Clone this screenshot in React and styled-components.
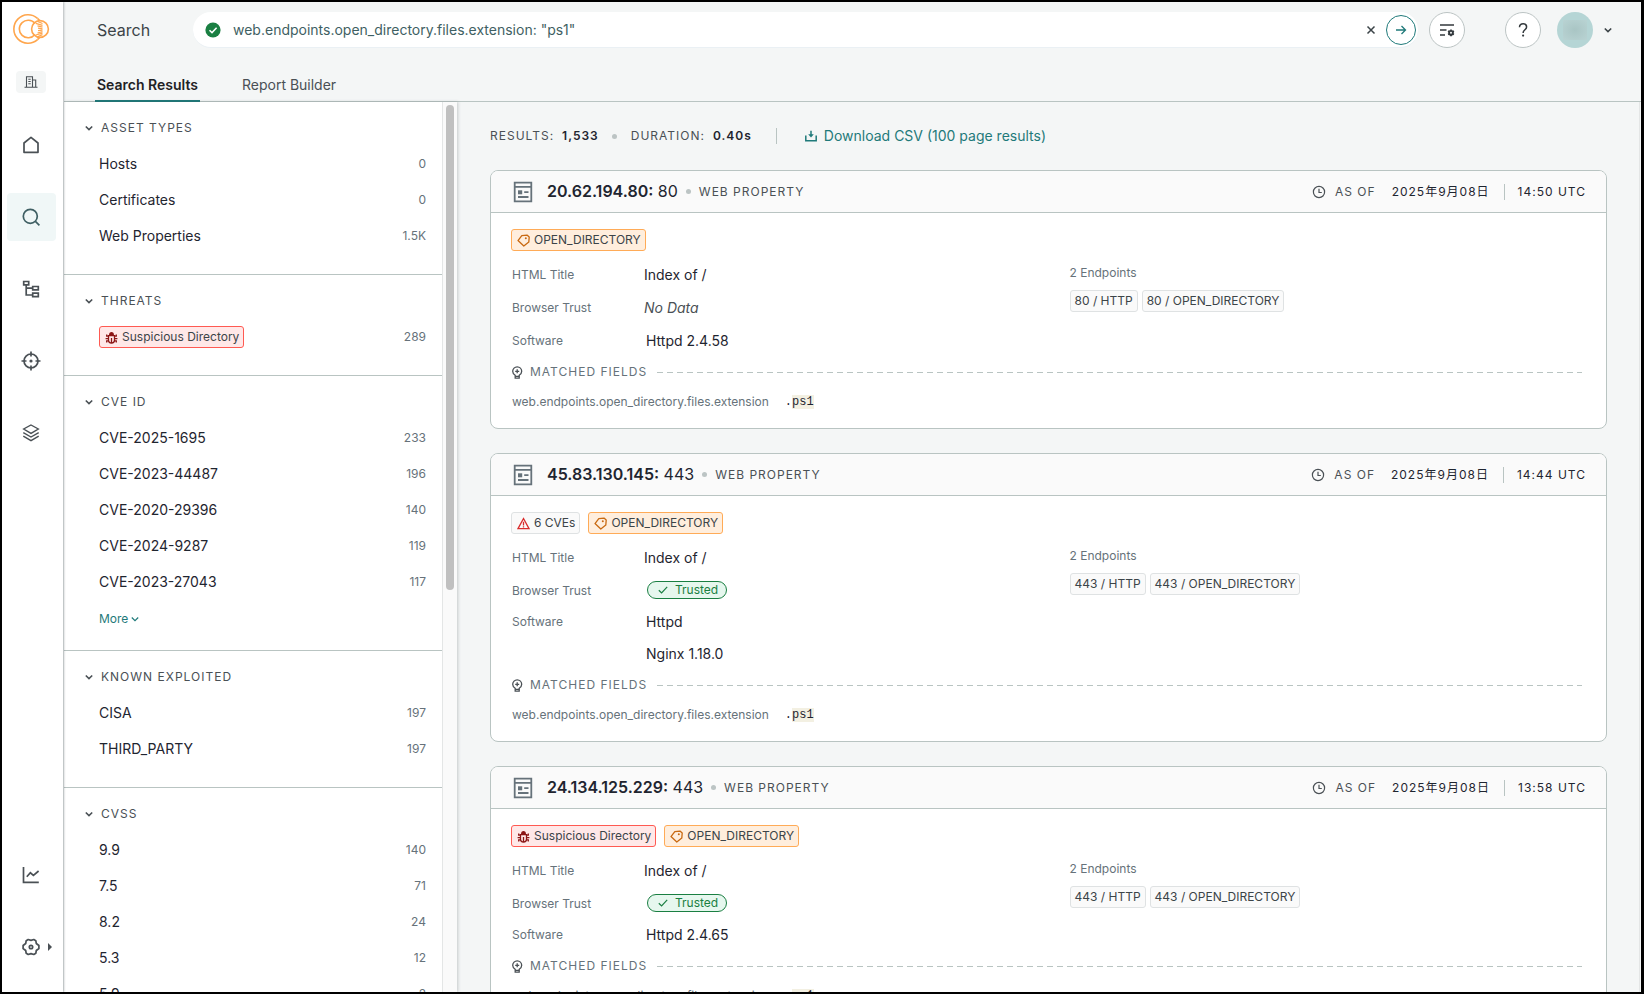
import React, { useState } from 'react';
import styled, { createGlobalStyle, css } from 'styled-components';

const GlobalStyle = createGlobalStyle`
    * {
        box-sizing: border-box;
    }

    body {
        margin: 0;
        font-family: Inter, "Noto Sans CJK JP", sans-serif;
        font-size: 14px;
        line-height: 20px;
        color: #1f2530;
        background: #f4f6f6;
    }

    button, input {
        font: inherit;
        color: inherit;
        margin: 0;
        padding: 0;
        border: 0;
        background: none;
    }

    button {
        cursor: pointer;
    }

    a {
        color: inherit;
        text-decoration: none;
    }

    h2, h3, p, ul, dl, dd {
        margin: 0;
        padding: 0;
        font-weight: 400;
        list-style: none;
    }
`;

// facet groups
const facetGroups = [
    {
        title: 'ASSET TYPES',
        items: [['Hosts', '0'], ['Certificates', '0'], ['Web Properties', '1.5K']],
    },
    { title: 'THREATS', threat: true, items: [['Suspicious Directory', '289']] },
    {
        title: 'CVE ID',
        more: true,
        items: [
            ['CVE-2025-1695', '233'],
            ['CVE-2023-44487', '196'],
            ['CVE-2020-29396', '140'],
            ['CVE-2024-9287', '119'],
            ['CVE-2023-27043', '117'],
        ],
    },
    { title: 'KNOWN EXPLOITED', items: [['CISA', '197'], ['THIRD_PARTY', '197']] },
    {
        title: 'CVSS',
        items: [['9.9', '140'], ['7.5', '71'], ['8.2', '24'], ['5.3', '12'], ['5.9', '2']],
    },
];

// search results
const results = [
    {
        ip: '20.62.194.80',
        port: '80',
        time: '14:50 UTC',
        badges: [['tag', 'OPEN_DIRECTORY']],
        trusted: false,
        software: ['Httpd 2.4.58'],
    },
    {
        ip: '45.83.130.145',
        port: '443',
        time: '14:44 UTC',
        badges: [['cve', '6 CVEs'], ['tag', 'OPEN_DIRECTORY']],
        trusted: true,
        software: ['Httpd', 'Nginx 1.18.0'],
    },
    {
        ip: '24.134.125.229',
        port: '443',
        time: '13:58 UTC',
        badges: [['threat', 'Suspicious Directory'], ['tag', 'OPEN_DIRECTORY']],
        trusted: true,
        software: ['Httpd 2.4.65'],
    },
];

const badgeColors = {
    tag: { border: '#ffab57', background: '#ffeedd' },
    threat: { border: '#ff5a52', background: '#ffe8e8' },
    cve: { border: '#dfe2e3', background: '#fafafa' },
};

/* ---------- layout ---------- */

const Frame = styled.div`
    display: flex;
    height: 100vh;
    overflow: hidden;
    border: 2px solid #000;
    border-right-width: 3px;
`;

const Sidebar = styled.nav`
    flex: none;
    width: 61px;
    display: flex;
    flex-direction: column;
    align-items: center;
    padding: 8px 3px 0 0;
    background: #fff;
    color: #4a5055;
    z-index: 1;
    box-shadow: 1px 0 2px rgba(60, 70, 75, 0.35);
`;

const Logo = styled.a`
    display: flex;
    height: 38px;
`;

const OrgButton = styled.button`
    display: flex;
    align-items: center;
    justify-content: center;
    width: 30px;
    height: 22px;
    margin: 23px 0 16px;
    border-radius: 4px;
    background: #f4f6f6;
`;

const NavLink = styled.a`
    display: flex;
    align-items: center;
    justify-content: center;
    width: 49px;
    height: 48px;
    margin: 12px 0;
    border-radius: 4px;
    background: ${({ $active }) => ($active ? '#f0f7f7' : 'transparent')};
    color: ${({ $active }) => ($active ? '#3f5f63' : 'inherit')};
`;

const NavBottom = styled.div`
    display: flex;
    flex-direction: column;
    margin-top: auto;
    padding-bottom: 9px;
`;

const SettingsLink = styled(NavLink)`
    position: relative;
`;

const Caret = styled.span`
    position: absolute;
    left: 41px;
    top: 20px;
    border: 4px solid transparent;
    border-left-color: #4a5055;
    border-right: 0;
`;

const Page = styled.div`
    flex: 1;
    min-width: 0;
    display: flex;
    flex-direction: column;
    padding-left: 1px;
`;

const TopBar = styled.header`
    display: flex;
    align-items: center;
    height: 56px;
    padding: 0 28px 0 33px;
    color: #3c4448;
`;

const PageTitle = styled.h2`
    width: 96px;
    font-size: 16px;
`;

const SearchForm = styled.form`
    flex: 1;
    display: flex;
    align-items: center;
    height: 36px;
    padding: 0 2px 0 12px;
    border-radius: 18px;
    border-bottom: 1px solid #eaf0f4;
    background: #fff;
`;

const SearchInput = styled.input`
    flex: 1;
    min-width: 0;
    margin-left: 12px;
    color: #3f5f63;
    outline: none;
`;

const ClearButton = styled.button`
    display: flex;
    margin-right: 10px;
`;

const RoundButton = styled.button`
    flex: none;
    display: flex;
    align-items: center;
    justify-content: center;
    width: ${({ $size }) => $size || 36}px;
    height: ${({ $size }) => $size || 36}px;
    border: 1px solid ${({ $accent }) => ($accent ? '#1f7a7a' : '#bcc4c4')};
    border-radius: 50%;
    background: #fff;
    color: ${({ $accent }) => ($accent ? '#1f7a7a' : '#33393d')};
`;

const TopActions = styled.div`
    display: flex;
    align-items: center;
    margin-left: 11px;
`;

const UserButton = styled.button`
    display: flex;
    align-items: center;
    gap: 10px;
    margin-left: 16px;
`;

const HelpSlot = styled.div`
    margin-left: 40px;
`;

const Avatar = styled.span`
    display: flex;
    align-items: center;
    justify-content: center;
    width: 36px;
    height: 36px;
    border-radius: 50%;
    background: #b5d5d5;

    &::after {
        content: '';
        width: 24px;
        height: 20px;
        background: radial-gradient(#a9c5c4, #b9d3d3);
    }
`;

const Tabs = styled.div`
    display: flex;
    gap: 40px;
    height: 44px;
    padding-left: 31px;
    border-bottom: 1px solid #b9c4c2;
`;

const Tab = styled.button`
    height: 44px;
    padding: 12px 2px 0;
    border-bottom: 2px solid ${({ $active }) => ($active ? '#1f7a7a' : 'transparent')};
    font-weight: ${({ $active }) => ($active ? 600 : 400)};
    color: ${({ $active }) => ($active ? '#1f2225' : '#4a5055')};
`;

const Content = styled.div`
    flex: 1;
    min-height: 0;
    display: flex;
`;

/* ---------- facets ---------- */

const FacetPanel = styled.aside`
    flex: none;
    display: flex;
    width: 393px;
    background: #fafafa;
    box-shadow: 1px 0 3px rgba(60, 70, 75, 0.25);
`;

const FacetList = styled.div`
    width: 379px;
    overflow: hidden;
    border-right: 1px solid #e4e6e6;
    background: #fff;
`;

const ScrollTrack = styled.div`
    flex: 1;
    display: flex;
    justify-content: center;
    padding-top: 3px;
`;

const ScrollThumb = styled.div`
    width: 8px;
    height: 485px;
    border-radius: 4px;
    background: #c0c0c0;
`;

const FacetSection = styled.section`
    padding: 8px 16px 20px 20px;
    border-bottom: 1px solid #b9c4c2;
`;

const FacetTitle = styled.button`
    display: flex;
    align-items: center;
    gap: 7px;
    height: 36px;
    font-size: 12px;
    letter-spacing: 1px;
    color: #4a5055;
`;

const FacetRow = styled.li`
    display: flex;
    align-items: center;
    justify-content: space-between;
    height: 36px;
    padding-left: 15px;
`;

const Count = styled.span`
    font-size: 12px;
    color: #66727a;
`;

const MoreButton = styled.button`
    display: flex;
    align-items: center;
    gap: 2px;
    height: 30px;
    padding: 8px 0 0 15px;
    font-size: 12px;
    color: #1f7a7a;
`;

/* ---------- results ---------- */

const Main = styled.main`
    flex: 1;
    min-width: 0;
    padding: 0 32px 0 33px;
    margin-right: 1px;
    border-right: 1px solid #e4e6e6;
    overflow: hidden;
`;

const caps = css`
    font-size: 12px;
    letter-spacing: 1px;
`;

const Summary = styled.div`
    ${caps}
    display: flex;
    align-items: center;
    height: 68px;
    color: #4a5055;
`;

const Strong = styled.strong`
    margin-left: 8px;
    font-weight: 600;
    color: #1f2530;
`;

const Dot = styled.span`
    width: 5px;
    height: 5px;
    margin: ${({ $wide }) => ($wide ? '0 14px 0 13px' : '0 8px')};
    border-radius: 50%;
    background: #bcc4c4;
`;

const Divider = styled.span`
    width: 1px;
    height: 16px;
    margin: ${({ $wide }) => ($wide ? '0 28px 0 24px' : '0 13px 0 14px')};
    background: #b9c4c2;
`;

const DownloadLink = styled.a`
    display: flex;
    align-items: center;
    gap: 7px;
    font-size: 14px;
    letter-spacing: 0;
    color: #1f7a7a;
`;

const Card = styled.article`
    margin-bottom: 24px;
    border: 1px solid #b9c4c2;
    border-radius: 8px;
    overflow: hidden;
    background: #fff;
`;

const CardHeader = styled.header`
    ${caps}
    display: flex;
    align-items: center;
    height: 42px;
    padding: 0 20px 0 22px;
    border-bottom: 1px solid #b9c4c2;
    background: #fafafa;
    color: #4a5055;
`;

const CardTitle = styled.h3`
    margin-left: 14px;
    padding-bottom: 1px;
    font-size: 16px;
    letter-spacing: 0;
    color: #1f2530;

    b {
        font-weight: 600;
    }
`;

const AsOf = styled.div`
    display: flex;
    align-items: center;
    margin-left: auto;

    svg {
        margin-right: 9px;
    }

    time {
        color: #1f2530;
    }
`;

const DateText = styled.time`
    margin-left: 16px;
`;

const CardBody = styled.div`
    padding: 16px 20px 11px;
`;

const Badges = styled.div`
    display: flex;
    gap: ${({ $gap }) => $gap || 8}px;
`;

const Badge = styled.span`
    display: inline-flex;
    align-items: center;
    gap: 4px;
    height: 22px;
    padding: 0 4px 0 ${({ $plain }) => ($plain ? 4 : 5)}px;
    border: 1px solid ${({ $kind }) => badgeColors[$kind].border};
    border-radius: 3px;
    background: ${({ $kind }) => badgeColors[$kind].background};
    font-size: 12px;
    color: #3c4448;
`;

const Columns = styled.div`
    display: grid;
    grid-template-columns: 1fr 1fr;
    column-gap: 42px;
    padding-top: 8px;
`;

const Fields = styled.dl`
    display: grid;
    grid-template-columns: 132px 1fr;
    grid-template-rows: 33px ${({ $trusted }) => ($trusted ? 31 : 33)}px auto;
    padding-left: 1px;
    line-height: 32px;
`;

const Label = styled.dt`
    font-size: 12px;
    color: #66727a;
`;

const Value = styled.dd`
    display: flex;
    align-items: center;
    padding-bottom: 2px;
    color: ${({ $muted }) => ($muted ? '#4a5055' : '#1f2530')};
    font-style: ${({ $muted }) => ($muted ? 'italic' : 'normal')};
`;

const SoftwareList = styled.dd`
    padding-left: 2px;
`;

const Trusted = styled.span`
    display: inline-flex;
    align-items: center;
    gap: 7px;
    height: 18px;
    margin-left: 3px;
    padding: 0 8px 0 10px;
    border: 1px solid #1a7f42;
    border-radius: 9px;
    background: #e6f7ee;
    font-size: 12px;
    color: #1a7f42;
`;

const EndpointsLabel = styled.p`
    height: 27px;
    margin-bottom: 4px;
    font-size: 12px;
    line-height: 27px;
    color: #66727a;
`;

const MatchedTitle = styled.div`
    ${caps}
    display: flex;
    align-items: center;
    gap: 6px;
    height: 30px;
    color: #66727a;
`;

const DashedLine = styled.span`
    flex: 1;
    height: 1px;
    margin: 0 4px;
    background: repeating-linear-gradient(90deg, #b9c4c2 0 6px, transparent 6px 10px);
`;

const MatchedRow = styled.div`
    display: flex;
    align-items: center;
    gap: 16px;
    height: 30px;
    padding-left: 1px;
    font-size: 12px;
    color: #66727a;
`;

const Code = styled.code`
    font-family: "Liberation Mono", monospace;
    font-size: 12px;
    line-height: 12px;
    color: #1f2530;

    mark {
        background: #f3f0e2;
        color: inherit;
    }
`;

/* ---------- icons ---------- */

const Icon = ({ size = 18, box = 18, width = 1.7, children }) => (
    <svg
        width={size}
        height={size}
        viewBox={`0 0 ${box} ${box}`}
        fill="none"
        stroke="currentColor"
        strokeWidth={width}
        aria-hidden="true"
    >
        {children}
    </svg>
);

const LogoIcon = () => (
    <svg width="38" height="38" viewBox="0 0 38 38" fill="none" stroke="#ffa64d" strokeWidth="1.6" aria-hidden="true">
        <path d="M25.500 8.400A14.200 14.200 0 1 0 25.500 29.600" />
        <path d="M23 13.500A8.800 8.800 0 1 0 23 24.500" />
        <path d="M25.500 8.400l2 2M25.500 29.600l2-2" />
        <circle cx="28" cy="19" r="8.4" />
        <path
            strokeWidth="1.2"
            d="M25 11.200l5.500 2.300M23.800 13.400l6.700 2M25.500 15.800l5 1.400M26 18.200l4.500.6M26 20.600l4.500-.4M25.500 23l5-1.300M23.800 25l6.700-1.900M25.500 26.800l5-2.200"
        />
    </svg>
);

const BuildingIcon = () => (
    <Icon size={14} box={14} width={1.1}>
        <path d="M.5 12.2h13M2.500 12V1.700h6V12M8.500 5h3.200v7M4.300 4.200h2.400M4.300 6.500h2.400M4.300 8.800h2.400" />
    </Icon>
);

const HomeIcon = () => (
    <Icon>
        <path strokeLinejoin="round" d="M2 7l7-5.600L16 7v9.300H2z" />
    </Icon>
);

const SearchIcon = () => (
    <Icon>
        <circle cx="8.300" cy="8.300" r="7" />
        <path d="M13.400 13.400l4 4" />
    </Icon>
);

const TreeIcon = () => (
    <Icon>
        <path d="M1.700 1.500h5v3.300h-5zM10.700 6.500h5.600v3.400h-5.600zM10.700 13.200h5.600v3.400h-5.600zM4.200 5v10h6.500M4.200 8.200h6.500" />
    </Icon>
);

const TargetIcon = () => (
    <Icon size={20} box={20}>
        <circle cx="10" cy="10" r="7" />
        <path d="M10 .5v5M10 14.500v5M.5 10h5M14.500 10h5" />
        <circle cx="10" cy="10" r="1.600" fill="currentColor" stroke="none" />
    </Icon>
);

const LayersIcon = () => (
    <Icon width={1.4}>
        <path d="M9 1l7.300 4L9 9.400 1.700 5zM1.300 8.700L9 13l7.700-4.300M1.300 12.200L9 16.600l7.700-4.400" />
    </Icon>
);

const ChartIcon = () => (
    <Icon>
        <path d="M1.500 1v15.400h15.300M4.800 10.800l3.600-4 3 2.500L16.600 5" />
    </Icon>
);

const GearIcon = () => (
    <Icon>
        <path
            strokeLinejoin="round"
            d="M6.200 1.500L9 2.400l2.800-.9 2 1.200.5 2.800 2.600 2v3l-2.600 2-.5 2.800-2 1.200L9 15.600l-2.800.9-2-1.200-.5-2.800-2.600-2v-3l2.600-2 .5-2.800z"
        />
        <circle cx="9" cy="9" r="1.700" />
    </Icon>
);

const CheckCircleIcon = () => (
    <svg width="16" height="16" viewBox="0 0 16 16" aria-hidden="true">
        <circle cx="8" cy="8" r="7.600" fill="#1a7f42" />
        <path d="M4.500 8.200l2.500 2.400 4.600-4.800" fill="none" stroke="#fff" strokeWidth="1.500" />
    </svg>
);

const CloseIcon = () => (
    <Icon size={10} box={10} width={1.5}>
        <path d="M1.500 1.500l7 7M8.500 1.500l-7 7" />
    </Icon>
);

const ArrowIcon = () => (
    <Icon size={12} box={12} width={1.3}>
        <path d="M1 6h9.500M6.500 2l4 4-4 4" />
    </Icon>
);

const FilterIcon = () => (
    <Icon size={16} box={16} width={1.5}>
        <path d="M1 3h14M1 8h6.500M1 13h5" />
        <circle cx="12" cy="10.800" r="1.900" strokeWidth="1.900" />
        <path strokeWidth="1.700" d="M12 7.400v1.200M12 13v1.200M9.100 9.100l1 .6M13.900 11.900l1 .6M9.100 12.500l1-.6M13.900 9.700l1-.6" />
    </Icon>
);

const HelpIcon = () => (
    <Icon size={16} box={16} width={1.5}>
        <path d="M4.500 5.200C4.500 3 6 1.800 8.100 1.800s3.500 1.200 3.500 3.100c0 2.700-3.500 3-3.500 6" />
        <circle cx="8.100" cy="13.600" r="1.100" fill="currentColor" stroke="none" />
    </Icon>
);

const ChevronIcon = ({ width = 1.6 }) => (
    <Icon size={10} box={10} width={width}>
        <path d="M1.800 3.500L5 6.600l3.200-3.100" />
    </Icon>
);

const DownloadIcon = () => (
    <Icon size={12} box={12} width={1.5}>
        <path d="M.8 5.500v5.200h10.400V5.500M6 .8v5" />
        <path d="M3.200 4.200h5.600L6 7.600z" fill="currentColor" stroke="none" />
    </Icon>
);

const PropertyIcon = () => (
    <svg width="20" height="22" viewBox="0 0 20 22" fill="none" stroke="#66727a" strokeWidth="1.8" aria-hidden="true">
        <path d="M1.700 1.700h16.600v18.600H1.700zM1.700 5.800h16.600M11.200 11.200h4.300M5 16h10.500" />
        <rect x="5" y="9.300" width="4.200" height="4" fill="#66727a" stroke="none" />
    </svg>
);

const ClockIcon = () => (
    <Icon size={14} box={14} width={1.2}>
        <circle cx="7" cy="7" r="5.600" />
        <path d="M7 3.800V7.500h2.800" />
    </Icon>
);

const BulbIcon = () => (
    <Icon size={13} box={13} width={1.3}>
        <g stroke="#4a5055">
            <path d="M4.200 9.300C2.700 8.400 1.700 7 1.700 5.300a4.500 4.500 0 0 1 9 0c0 1.700-1 3.100-2.500 4v2.900h-4z" />
            <path d="M4.200 10.400h4M6.200 3.300v4M4.200 5.300h4" />
        </g>
    </Icon>
);

const TagIcon = () => (
    <svg width="13" height="13" viewBox="0 0 13 13" fill="none" stroke="#c96a12" strokeWidth="1.3" aria-hidden="true">
        <path d="M1 6.600L4.800 1.600l5.200-.5 2.200 2-.4 5L6.800 12z" strokeLinejoin="round" />
        <circle cx="8.800" cy="4.200" r="1" fill="#c96a12" stroke="none" />
    </svg>
);

const BugIcon = () => (
    <svg width="13" height="13" viewBox="0 0 13 13" fill="none" stroke="#8c1616" strokeWidth="1.3" aria-hidden="true">
        <path d="M3.500 4.600h6v4.700c0 1.600-1.300 2.800-3 2.800s-3-1.200-3-2.800zM6.500 7v5M3.500 7.600H.6M9.500 7.600h2.900M3.500 5.200H1.700V3.600M9.500 5.200h1.800V3.600M3.700 9.800h-2v1.800M9.300 9.800h2v1.800" />
        <path d="M4 4.200C4 2 5 1 6.500 1S9 2 9 4.200z" fill="#8c1616" stroke="none" />
    </svg>
);

const WarningIcon = () => (
    <svg width="13" height="13" viewBox="0 0 13 13" fill="none" stroke="#d92c2c" strokeWidth="1.3" aria-hidden="true">
        <path d="M6.500 1.500L12 11.600H1zM6.500 4.800v3.600M6.500 9.200v1.200" />
    </svg>
);

const CheckIcon = () => (
    <Icon size={10} box={10} width={1.2}>
        <path d="M.8 5.200l2.800 2.700 5.600-6" />
    </Icon>
);

const badgeIcons = { tag: TagIcon, threat: BugIcon, cve: WarningIcon };

const IconBadge = ({ kind, children }) => {
    const BadgeIcon = badgeIcons[kind];
    return (
        <Badge $kind={kind}>
            <BadgeIcon />
            {children}
        </Badge>
    );
};

/* ---------- sections ---------- */

const FacetGroup = ({ group }) => (
    <FacetSection>
        <FacetTitle type="button">
            <ChevronIcon />
            {group.title}
        </FacetTitle>
        <ul>
            {group.items.map(([name, count]) => (
                <FacetRow key={name}>
                    {group.threat ? <IconBadge kind="threat">{name}</IconBadge> : <a href="#facet">{name}</a>}
                    <Count>{count}</Count>
                </FacetRow>
            ))}
        </ul>
        {group.more && (
            <MoreButton type="button">
                More
                <ChevronIcon width={1.2} />
            </MoreButton>
        )}
    </FacetSection>
);

const ResultCard = ({ result }) => (
    <Card>
        <CardHeader>
            <PropertyIcon />
            <CardTitle>
                <b>{result.ip}:</b> {result.port}
            </CardTitle>
            <Dot />
            WEB PROPERTY
            <AsOf>
                <ClockIcon />
                AS OF
                <DateText>2025年9月08日</DateText>
                <Divider />
                <time>{result.time}</time>
            </AsOf>
        </CardHeader>
        <CardBody>
            <Badges>
                {result.badges.map(([kind, text]) => (
                    <IconBadge key={text} kind={kind}>{text}</IconBadge>
                ))}
            </Badges>
            <Columns>
                <Fields $trusted={result.trusted}>
                    <Label>HTML Title</Label>
                    <Value>Index of /</Value>
                    <Label>Browser Trust</Label>
                    {result.trusted ? (
                        <Value>
                            <Trusted>
                                <CheckIcon />
                                Trusted
                            </Trusted>
                        </Value>
                    ) : (
                        <Value $muted>No Data</Value>
                    )}
                    <Label>Software</Label>
                    <SoftwareList>
                        {result.software.map((name) => (
                            <div key={name}>{name}</div>
                        ))}
                    </SoftwareList>
                </Fields>
                <div>
                    <EndpointsLabel>2 Endpoints</EndpointsLabel>
                    <Badges $gap={4}>
                        <Badge $kind="cve" $plain>{result.port} / HTTP</Badge>
                        <Badge $kind="cve" $plain>{result.port} / OPEN_DIRECTORY</Badge>
                    </Badges>
                </div>
            </Columns>
            <MatchedTitle>
                <BulbIcon />
                MATCHED FIELDS
                <DashedLine />
            </MatchedTitle>
            <MatchedRow>
                web.endpoints.open_directory.files.extension
                <Code>.<mark>ps1</mark></Code>
            </MatchedRow>
        </CardBody>
    </Card>
);

const App = () => {
    const [query, setQuery] = useState('web.endpoints.open_directory.files.extension: "ps1"');
    const [activeTab, setActiveTab] = useState('results');

    return (
        <>
            <GlobalStyle />
            <Frame>
                <Sidebar>
                    <Logo href="#top" aria-label="Start"><LogoIcon /></Logo>
                    <OrgButton type="button" aria-label="Organization"><BuildingIcon /></OrgButton>
                    <NavLink href="#home" aria-label="Home"><HomeIcon /></NavLink>
                    <NavLink href="#search" aria-label="Search" $active><SearchIcon /></NavLink>
                    <NavLink href="#tree" aria-label="Collections"><TreeIcon /></NavLink>
                    <NavLink href="#target" aria-label="Threat hunting"><TargetIcon /></NavLink>
                    <NavLink href="#layers" aria-label="Datasets"><LayersIcon /></NavLink>
                    <NavBottom>
                        <NavLink href="#usage" aria-label="Usage"><ChartIcon /></NavLink>
                        <SettingsLink href="#settings" aria-label="Settings">
                            <GearIcon />
                            <Caret />
                        </SettingsLink>
                    </NavBottom>
                </Sidebar>
                <Page>
                    <TopBar>
                        <PageTitle>Search</PageTitle>
                        <SearchForm onSubmit={(e) => e.preventDefault()}>
                            <CheckCircleIcon />
                            <SearchInput
                                aria-label="Search query"
                                value={query}
                                onChange={(e) => setQuery(e.target.value)}
                            />
                            <ClearButton type="button" aria-label="Clear" onClick={() => setQuery('')}>
                                <CloseIcon />
                            </ClearButton>
                            <RoundButton type="submit" aria-label="Run search" $size={30} $accent>
                                <ArrowIcon />
                            </RoundButton>
                        </SearchForm>
                        <TopActions>
                            <RoundButton type="button" aria-label="Search settings"><FilterIcon /></RoundButton>
                            <HelpSlot>
                                <RoundButton type="button" aria-label="Help"><HelpIcon /></RoundButton>
                            </HelpSlot>
                            <UserButton type="button" aria-label="Account">
                                <Avatar />
                                <ChevronIcon />
                            </UserButton>
                        </TopActions>
                    </TopBar>
                    <Tabs>
                        <Tab type="button" $active={activeTab === 'results'} onClick={() => setActiveTab('results')}>
                            Search Results
                        </Tab>
                        <Tab type="button" $active={activeTab === 'report'} onClick={() => setActiveTab('report')}>
                            Report Builder
                        </Tab>
                    </Tabs>
                    <Content>
                        <FacetPanel>
                            <FacetList>
                                {facetGroups.map((group) => (
                                    <FacetGroup key={group.title} group={group} />
                                ))}
                            </FacetList>
                            <ScrollTrack>
                                <ScrollThumb />
                            </ScrollTrack>
                        </FacetPanel>
                        <Main>
                            <Summary>
                                RESULTS:
                                <Strong>1,533</Strong>
                                <Dot $wide />
                                DURATION:
                                <Strong>0.40s</Strong>
                                <Divider $wide />
                                <DownloadLink href="#csv">
                                    <DownloadIcon />
                                    Download CSV (100 page results)
                                </DownloadLink>
                            </Summary>
                            {results.map((result) => (
                                <ResultCard key={result.ip} result={result} />
                            ))}
                        </Main>
                    </Content>
                </Page>
            </Frame>
        </>
    );
};

export default App;
